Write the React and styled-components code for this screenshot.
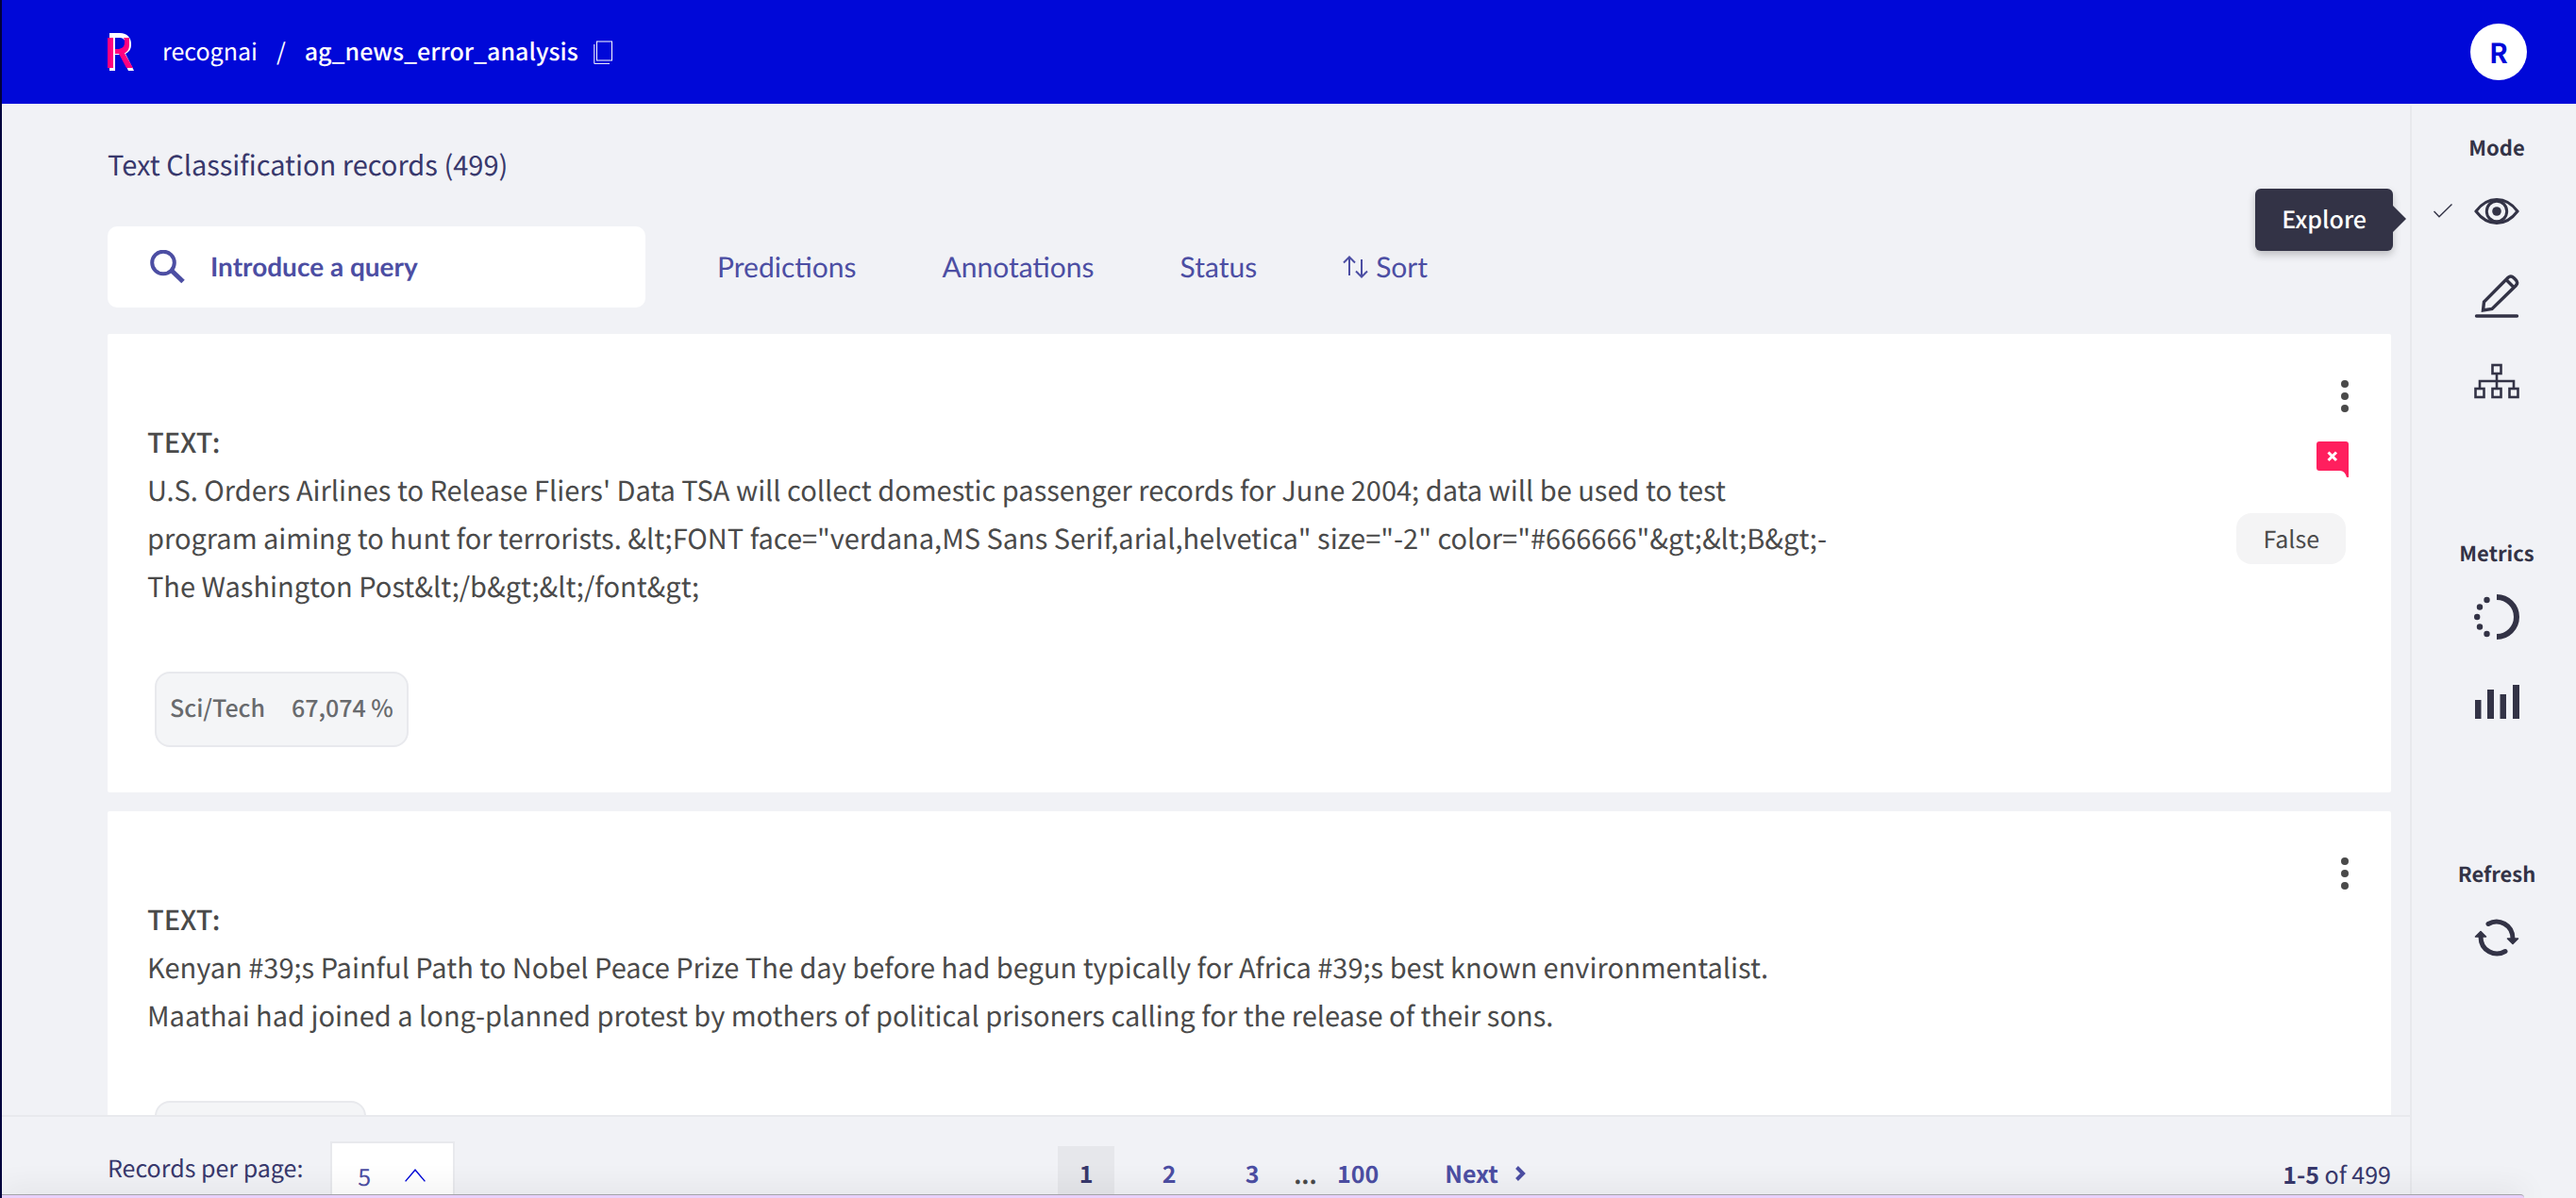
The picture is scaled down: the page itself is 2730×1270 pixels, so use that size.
import React from "react";
import styled, { createGlobalStyle } from "styled-components";

const sans = `"Noto Sans CJK SC", "Noto Sans", sans-serif`;
const geometric = `Lato, "Open Sans", sans-serif`;

const color = {
  brand: "#0008d8",
  page: "#f1f2f6",
  line: "#e8e9ed",
  ink: "#333346",
  text: "#4a4a4a",
  heading: "#38386c",
  accent: "#4c4ea3",
};

const GlobalStyle = createGlobalStyle`
  *, *::before, *::after { box-sizing: border-box; }
  body { margin: 0; background: ${color.page}; font-family: ${sans}; color: ${color.text}; text-rendering: geometricPrecision; }
  button, input, select { font-family: inherit; color: inherit; border: 0; padding: 0; margin: 0; background: none; border-radius: 0; text-rendering: inherit; }
  a { color: inherit; text-decoration: none; }
  h1, h2, p { margin: 0; font-weight: 400; }
  svg { display: block; flex: none; }
`;

const Shell = styled.div`
  height: 100vh;
  display: flex;
  flex-direction: column;
  overflow: hidden;
  border-left: 2px solid #00003c;
`;

const Header = styled.header`
  flex: none;
  height: 110px;
  display: flex;
  align-items: center;
  padding: 0 52px 0 112px;
  background: ${color.brand};
  color: #fff;
`;

const Breadcrumb = styled.nav`
  flex: 1;
  display: flex;
  align-items: center;
  margin-left: 29px;
  padding-bottom: 2px;
  font-size: 25px;
  line-height: 36px;
`;

const Separator = styled.span`
  margin: 0 20px;
`;

const Dataset = styled.a`
  font-weight: 500;
`;

const IconButton = styled.button`
  display: flex;
  cursor: pointer;
`;

const CopyButton = styled(IconButton)`
  margin: 4px 0 0 16px;
`;

const Avatar = styled.button`
  width: 60px;
  height: 60px;
  border-radius: 50%;
  background: #fff;
  color: ${color.brand};
  font-size: 29px;
  line-height: 60px;
  font-weight: 700;
`;

const Body = styled.div`
  flex: 1;
  min-height: 0;
  display: flex;
`;

const Main = styled.main`
  flex: 1;
  min-width: 0;
  display: flex;
  flex-direction: column;
`;

const Content = styled.div`
  flex: 1;
  min-height: 0;
  overflow: hidden;
  padding: 44px 20px 0 112px;
`;

const Title = styled.h1`
  font-size: 29px;
  line-height: 40px;
  color: ${color.heading};
`;

const Toolbar = styled.div`
  display: flex;
  align-items: center;
  margin: 46px 0 28px;
`;

const Search = styled.label`
  width: 570px;
  height: 86px;
  display: flex;
  align-items: center;
  gap: 26px;
  padding: 0 44px;
  border-radius: 10px;
  background: #fff;
  color: ${color.accent};
`;

const SearchInput = styled.input`
  flex: 1;
  min-width: 0;
  height: 40px;
  padding-bottom: 2px;
  font-family: ${geometric};
  font-size: 28px;
  font-weight: 700;
  outline: none;
  &::placeholder { color: ${color.accent}; opacity: 1; }
`;

const Filters = styled.div`
  display: flex;
  gap: 91px;
  margin-left: 76px;
`;

const Filter = styled.button`
  display: flex;
  align-items: center;
  gap: 8px;
  font-family: ${geometric};
  font-size: 30px;
  line-height: 40px;
  color: ${color.accent};
  cursor: pointer;
`;

const Records = styled.div`
  display: flex;
  flex-direction: column;
  gap: 20px;
`;

const Card = styled.article`
  display: flex;
  justify-content: space-between;
  background: #fff;
  border-radius: 2px;
`;

const CardBody = styled.div`
  padding: 89px 0 48px 42px;
`;

const FieldName = styled.h2`
  font-size: 29px;
  line-height: 51px;
  font-weight: 500;
`;

const FieldText = styled.p`
  font-size: 29px;
  line-height: 51px;
  white-space: pre-line;
`;

const Prediction = styled.div`
  width: fit-content;
  min-width: 224px;
  height: 80px;
  display: flex;
  align-items: center;
  gap: 28px;
  margin: 65px 0 0 8px;
  padding: 0 14px 4px;
  border: 2px solid ${color.line};
  border-radius: 16px;
  background: #f4f5f7;
  color: #686a6d;
  font-size: 25px;
  line-height: 36px;
  font-weight: 500;
`;

const CardMeta = styled.div`
  display: flex;
  flex-direction: column;
  align-items: flex-end;
  padding: 49px 45px 0 0;
`;

const Flag = styled.div`
  margin: 31px 0 38px;
`;

const Status = styled.span`
  margin-right: 3px;
  padding: 0 28px;
  border-radius: 16px;
  background: #f4f4f5;
  font-size: 25px;
  line-height: 54px;
`;

const Footer = styled.footer`
  flex: none;
  height: 88px;
  overflow: hidden;
  display: grid;
  grid-template-columns: 1fr auto 1fr;
  align-items: start;
  padding: 26px 20px 0 112px;
  border-top: 2px solid ${color.line};
  color: ${color.heading};
  font-size: 25px;
  line-height: 70px;
`;

const PerPage = styled.div`
  display: flex;
  align-items: flex-start;
  gap: 29px;
`;

const PerPageLabel = styled.label`
  line-height: 56px;
`;

const SelectBox = styled.div`
  position: relative;
  width: 132px;
  height: 70px;
  border: 2px solid ${color.line};
  background: #fff;
  svg { position: absolute; right: 29px; top: 27px; pointer-events: none; }
`;

const Select = styled.select`
  appearance: none;
  width: 100%;
  height: 100%;
  padding: 0 0 6px 27px;
  font-size: 25px;
  color: ${color.accent};
`;

const Pages = styled.nav`
  display: flex;
  align-items: center;
  margin-left: 90px;
  color: ${color.accent};
`;

const Page = styled.button`
  min-width: 60px;
  height: 60px;
  margin-right: ${(p) => p.$gap}px;
  padding-bottom: 2px;
  background: ${(p) => (p.$current ? "#e6e7eb" : "none")};
  color: ${(p) => (p.$current ? color.heading : color.accent)};
  font-size: 25px;
  line-height: 58px;
  font-weight: 700;
`;

const Ellipsis = styled.span`
  width: 38px;
  color: ${color.text};
  font-weight: 700;
`;

const Next = styled.button`
  display: flex;
  align-items: center;
  gap: 18px;
  margin-left: 62px;
  padding-bottom: 2px;
  font-size: 25px;
  line-height: 58px;
  font-weight: 700;
`;

const Range = styled.p`
  justify-self: end;
  strong { font-weight: 700; }
`;

const Sidebar = styled.aside`
  flex: none;
  width: 176px;
  margin-top: 2px;
  padding-top: 26px;
  border-left: 2px solid ${color.line};
  color: ${color.ink};
`;

const Group = styled.section`
  display: flex;
  flex-direction: column;
  align-items: center;
  padding-left: 6px;
  margin-bottom: 140px;
`;

const GroupTitle = styled.h2`
  font-size: 22px;
  line-height: 36px;
  font-weight: 700;
`;

const Tool = styled.button`
  position: relative;
  width: 48px;
  height: 48px;
  margin-top: ${(p) => p.$before}px;
  display: flex;
  align-items: center;
  justify-content: center;
  cursor: pointer;
`;

const Selected = styled.span`
  position: absolute;
  right: 71px;
  top: 16px;
`;

const Tooltip = styled.span`
  position: absolute;
  right: 134px;
  top: 0;
  padding: 0 28px 2px;
  border-radius: 6px;
  background: ${color.ink};
  box-shadow: 0 4px 8px rgba(0, 0, 0, 0.22);
  color: #fff;
  font-size: 25px;
  line-height: 64px;
  font-weight: 500;
  &::after {
    content: "";
    position: absolute;
    left: 100%;
    top: 18px;
    border: 14px solid transparent;
    border-right: 0;
    border-left-color: ${color.ink};
  }
`;

const Dock = styled.div`
  position: fixed;
  left: 2px;
  right: 55px;
  bottom: 0;
  height: 4px;
  border-top: 1px solid #a3a3a8;
  border-top-right-radius: 8px;
  background: #e9d0fa;
  box-shadow: 0 0 30px rgba(0, 0, 0, 0.3);
`;

const Logo = () => (
  <svg width="29" height="40" viewBox="0 0 29 40" aria-label="Recognai">
    <path fill="#fff" fillRule="evenodd" d="M2 0H13C21 0 25 5 25 12C25 17 23 20 19 22L28 40H22L14 23H8V40H2ZM8 5V18H13C17 18 19 16 19 12C19 8 17 5 13 5Z" />
    <path fill="#ff0080" d="M0 5H6V37H0ZM17 5H23V13C23 17 21 20 18 21.500L27 37H20L12 22H8V17H12C16 16 18 14 18 10C18 8 18 7 17 5Z" />
  </svg>
);

const CopyIcon = () => (
  <svg width="21" height="26" viewBox="0 0 21 26" fill="none" stroke="#fff">
    <rect x="3.5" y="1" width="16" height="20" />
    <path d="M.8 4V24.4H17" />
  </svg>
);

const SearchIcon = () => (
  <svg width="39" height="36" viewBox="0 0 39 36" fill="none" stroke="currentColor">
    <circle cx="15" cy="13.5" r="11.8" strokeWidth="4" />
    <path d="M24 22L36 33.5" strokeWidth="5" />
  </svg>
);

const SortIcon = () => (
  <svg width="27" height="24" viewBox="0 0 27 24" fill="none" stroke="currentColor" strokeWidth="2">
    <path d="M7 21V1.500M1 7.500L7 1.500L13 7.500M20 4V22.500M14 16.500L20 22.500L26 16.500" />
  </svg>
);

const DotsIcon = () => (
  <svg width="8" height="34" viewBox="0 0 8 34" fill={color.text}>
    <circle cx="4" cy="4" r="4" />
    <circle cx="4" cy="17" r="4" />
    <circle cx="4" cy="30" r="4" />
  </svg>
);

const FlagIcon = () => (
  <svg width="34" height="38" viewBox="0 0 34 38" role="img" aria-label="Wrong prediction">
    <path fill="#ff1f5e" d="M3 0H31Q34 0 34 3V38H32Q30 31 25 31H3Q0 31 0 28V3Q0 0 3 0Z" />
    <path d="M12.500 11.500L21 20M21 11.500L12.500 20" stroke="#fff" strokeWidth="3" />
  </svg>
);

const ChevronUp = () => (
  <svg width="22" height="14" viewBox="0 0 22 14" fill="none" stroke={color.brand} strokeWidth="1.400">
    <path d="M.6 13.400L11 1.200L21.400 13.400" />
  </svg>
);

const ChevronRight = () => (
  <svg width="11" height="16" viewBox="0 0 11 16" fill="none" stroke="currentColor" strokeWidth="4">
    <path d="M1.500 1.500L8 8L1.500 14.500" />
  </svg>
);

const CheckIcon = () => (
  <svg width="20" height="15" viewBox="0 0 20 15" fill="none" stroke="currentColor" strokeWidth="1.400">
    <path d="M.5 8L6 13.800L19.500 .6" />
  </svg>
);

const EyeIcon = () => (
  <svg width="48" height="28" viewBox="0 0 48 28" fill="none" stroke="currentColor" strokeWidth="3">
    <path d="M2 14C8 6 15 1.600 24 1.600S40 6 46 14C40 22 33 26.400 24 26.400S8 22 2 14Z" />
    <circle cx="24" cy="14" r="10.700" />
    <circle cx="24" cy="14" r="4.800" fill="currentColor" stroke="none" />
  </svg>
);

const PencilIcon = () => (
  <svg width="48" height="48" viewBox="0 0 48 48" fill="none" stroke="currentColor" strokeWidth="3.400">
    <path d="M9.500 39L10.500 30L36 4.200Q39 1.500 42 4.500L44 6.500Q47 9.500 44.500 12.500L19 37.500Z" />
    <path d="M34 6.500L42 14.500" />
    <path d="M2.500 45H45.500" strokeLinecap="round" />
  </svg>
);

const TreeIcon = () => (
  <svg width="48" height="38" viewBox="0 0 48 38" fill="none" stroke="currentColor" strokeWidth="2.600">
    <rect x="19.500" y="2" width="9" height="9" />
    <rect x="1.500" y="27" width="9" height="9" />
    <rect x="19.500" y="27" width="9" height="9" />
    <rect x="37.500" y="27" width="9" height="9" />
    <path d="M24 11V27M6 27V19H42V27" />
  </svg>
);

const RingIcon = () => (
  <svg width="48" height="48" viewBox="0 0 48 48" fill="currentColor">
    <path d="M24 3A21 21 0 0 1 24 45" fill="none" stroke="currentColor" strokeWidth="6" />
    <circle cx="13.500" cy="6" r="3.200" />
    <circle cx="6" cy="13.500" r="3.200" />
    <circle cx="3.200" cy="24" r="3.200" />
    <circle cx="6" cy="34.500" r="3.200" />
    <circle cx="13.500" cy="42" r="3.200" />
  </svg>
);

const BarsIcon = () => (
  <svg width="48" height="36" viewBox="0 0 48 36" fill="currentColor">
    <path d="M1 16H7.500V36H1ZM14 5H21V36H14ZM27.500 10H34V36H27.500ZM41 0H48V36H41Z" />
  </svg>
);

const RefreshIcon = () => (
  <svg width="48" height="40" viewBox="0 0 48 40" fill="none" stroke="currentColor" strokeWidth="5" strokeLinecap="round">
    <path d="M15 5.500C26 -1 41 6 41 21" />
    <path d="M33 34.500C22 41 7 34 7 19" />
    <path d="M35.500 21H46.500L41 26.500ZM1.500 19H12.500L7 13.500Z" fill="currentColor" strokeWidth="1.600" strokeLinejoin="round" />
  </svg>
);

const records = [
  {
    lines: [
      `U.S. Orders Airlines to Release Fliers' Data TSA will collect domestic passenger records for June 2004; data will be used to test`,
      `program aiming to hunt for terrorists. &lt;FONT face="verdana,MS Sans Serif,arial,helvetica" size="-2" color="#666666"&gt;&lt;B&gt;-`,
      `The Washington Post&lt;/b&gt;&lt;/font&gt;`,
    ],
    label: "Sci/Tech",
    score: "67,074 %",
    status: "False",
  },
  {
    lines: [
      `Kenyan #39;s Painful Path to Nobel Peace Prize The day before had begun typically for Africa #39;s best known environmentalist.`,
      `Maathai had joined a long-planned protest by mothers of political prisoners calling for the release of their sons.`,
    ],
  },
];

const Record = ({ lines, label, score, status }) => (
  <Card>
    <CardBody>
      <FieldName>TEXT:</FieldName>
      <FieldText>{lines.join("\n")}</FieldText>
      <Prediction>
        {label && <span>{label}</span>}
        {score && <span>{score}</span>}
      </Prediction>
    </CardBody>
    <CardMeta>
      <IconButton aria-label="Record options"><DotsIcon /></IconButton>
      {status && <Flag><FlagIcon /></Flag>}
      {status && <Status>{status}</Status>}
    </CardMeta>
  </Card>
);

export default function App() {
  return (
    <Shell>
      <GlobalStyle />
      <Header>
        <Logo />
        <Breadcrumb aria-label="Breadcrumb">
          <a href="#recognai">recognai</a>
          <Separator>/</Separator>
          <Dataset href="#dataset">ag_news_error_analysis</Dataset>
          <CopyButton aria-label="Copy name"><CopyIcon /></CopyButton>
        </Breadcrumb>
        <Avatar>R</Avatar>
      </Header>
      <Body>
        <Main>
          <Content>
            <Title>Text Classification records (499)</Title>
            <Toolbar>
              <Search>
                <SearchIcon />
                <SearchInput type="text" placeholder="Introduce a query" aria-label="Introduce a query" />
              </Search>
              <Filters>
                <Filter>Predictions</Filter>
                <Filter>Annotations</Filter>
                <Filter>Status</Filter>
                <Filter><SortIcon />Sort</Filter>
              </Filters>
            </Toolbar>
            <Records>
              {records.map((record, i) => <Record key={i} {...record} />)}
            </Records>
          </Content>
          <Footer>
            <PerPage>
              <PerPageLabel htmlFor="per-page">Records per page:</PerPageLabel>
              <SelectBox>
                <Select id="per-page" defaultValue="5">
                  <option>5</option>
                  <option>10</option>
                  <option>20</option>
                </Select>
                <ChevronUp />
              </SelectBox>
            </PerPage>
            <Pages aria-label="Pagination">
              <Page $current $gap={28}>1</Page>
              <Page $gap={28}>2</Page>
              <Page $gap={14}>3</Page>
              <Ellipsis>...</Ellipsis>
              <Page $gap={0}>100</Page>
              <Next>Next<ChevronRight /></Next>
            </Pages>
            <Range><strong>1-5</strong> of 499</Range>
          </Footer>
        </Main>
        <Sidebar>
          <Group>
            <GroupTitle>Mode</GroupTitle>
            <Tool $before={26} aria-label="Explore">
              <EyeIcon />
              <Selected><CheckIcon /></Selected>
              <Tooltip role="tooltip">Explore</Tooltip>
            </Tool>
            <Tool $before={42} aria-label="Annotate"><PencilIcon /></Tool>
            <Tool $before={42} aria-label="Define rules"><TreeIcon /></Tool>
          </Group>
          <Group>
            <GroupTitle>Metrics</GroupTitle>
            <Tool $before={26} aria-label="Progress"><RingIcon /></Tool>
            <Tool $before={42} aria-label="Stats"><BarsIcon /></Tool>
          </Group>
          <Group>
            <GroupTitle>Refresh</GroupTitle>
            <Tool $before={26} aria-label="Refresh"><RefreshIcon /></Tool>
          </Group>
        </Sidebar>
      </Body>
      <Dock />
    </Shell>
  );
}
